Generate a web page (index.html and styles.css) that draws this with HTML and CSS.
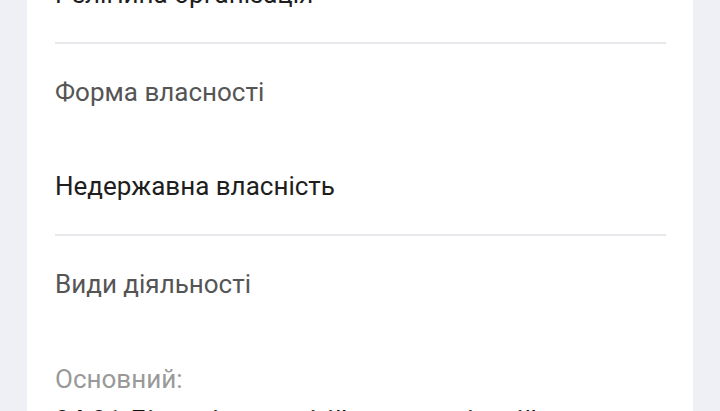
FILE: index.html
```html
<!DOCTYPE html>
<html lang="uk">
<head>
    <meta charset="UTF-8">
    <meta name="viewport" content="width=device-width, initial-scale=1.0">
    <title>Реквізити</title>
    <link rel="stylesheet" href="styles.css">
</head>
<body>

    <!-- Картка з даними організації -->
    <div class="card">
        <div class="section">
            <div class="label">Організаційно-правова форма</div>
            <div class="value">Релігійна організація</div>
        </div>
        <div class="section">
            <div class="label">Форма власності</div>
            <div class="value">Недержавна власність</div>
        </div>
        <div class="section last">
            <div class="label">Види діяльності</div>
            <div class="sublabel">Основний:</div>
            <div class="activity">94.91 Діяльність релігійних організацій</div>
        </div>
    </div>

</body>
</html>
```

FILE: styles.css
```css
body {
    font-family: Roboto, "Noto Sans", sans-serif;
    background: #eff0f5;
    margin: 0;
    overflow: hidden;
}
.card {
    background: #fff;
    margin: -148px 27px 0;
    padding: 0 27px 0 28px;
}
.section {
    padding: 32px 0;
    border-bottom: 2px solid #e8e8ec;
}
.section.last {
    border-bottom: none;
}
.label,
.value,
.sublabel,
.activity {
    font-size: 26px;
    line-height: 32px;
}
.label {
    color: #555;
}
.value {
    color: #1e1e1e;
    margin-top: 62px;
}
.sublabel {
    color: #999;
    margin-top: 63px;
}
.activity {
    color: #111;
    font-weight: 500;
    margin-top: 9px;
}
```
